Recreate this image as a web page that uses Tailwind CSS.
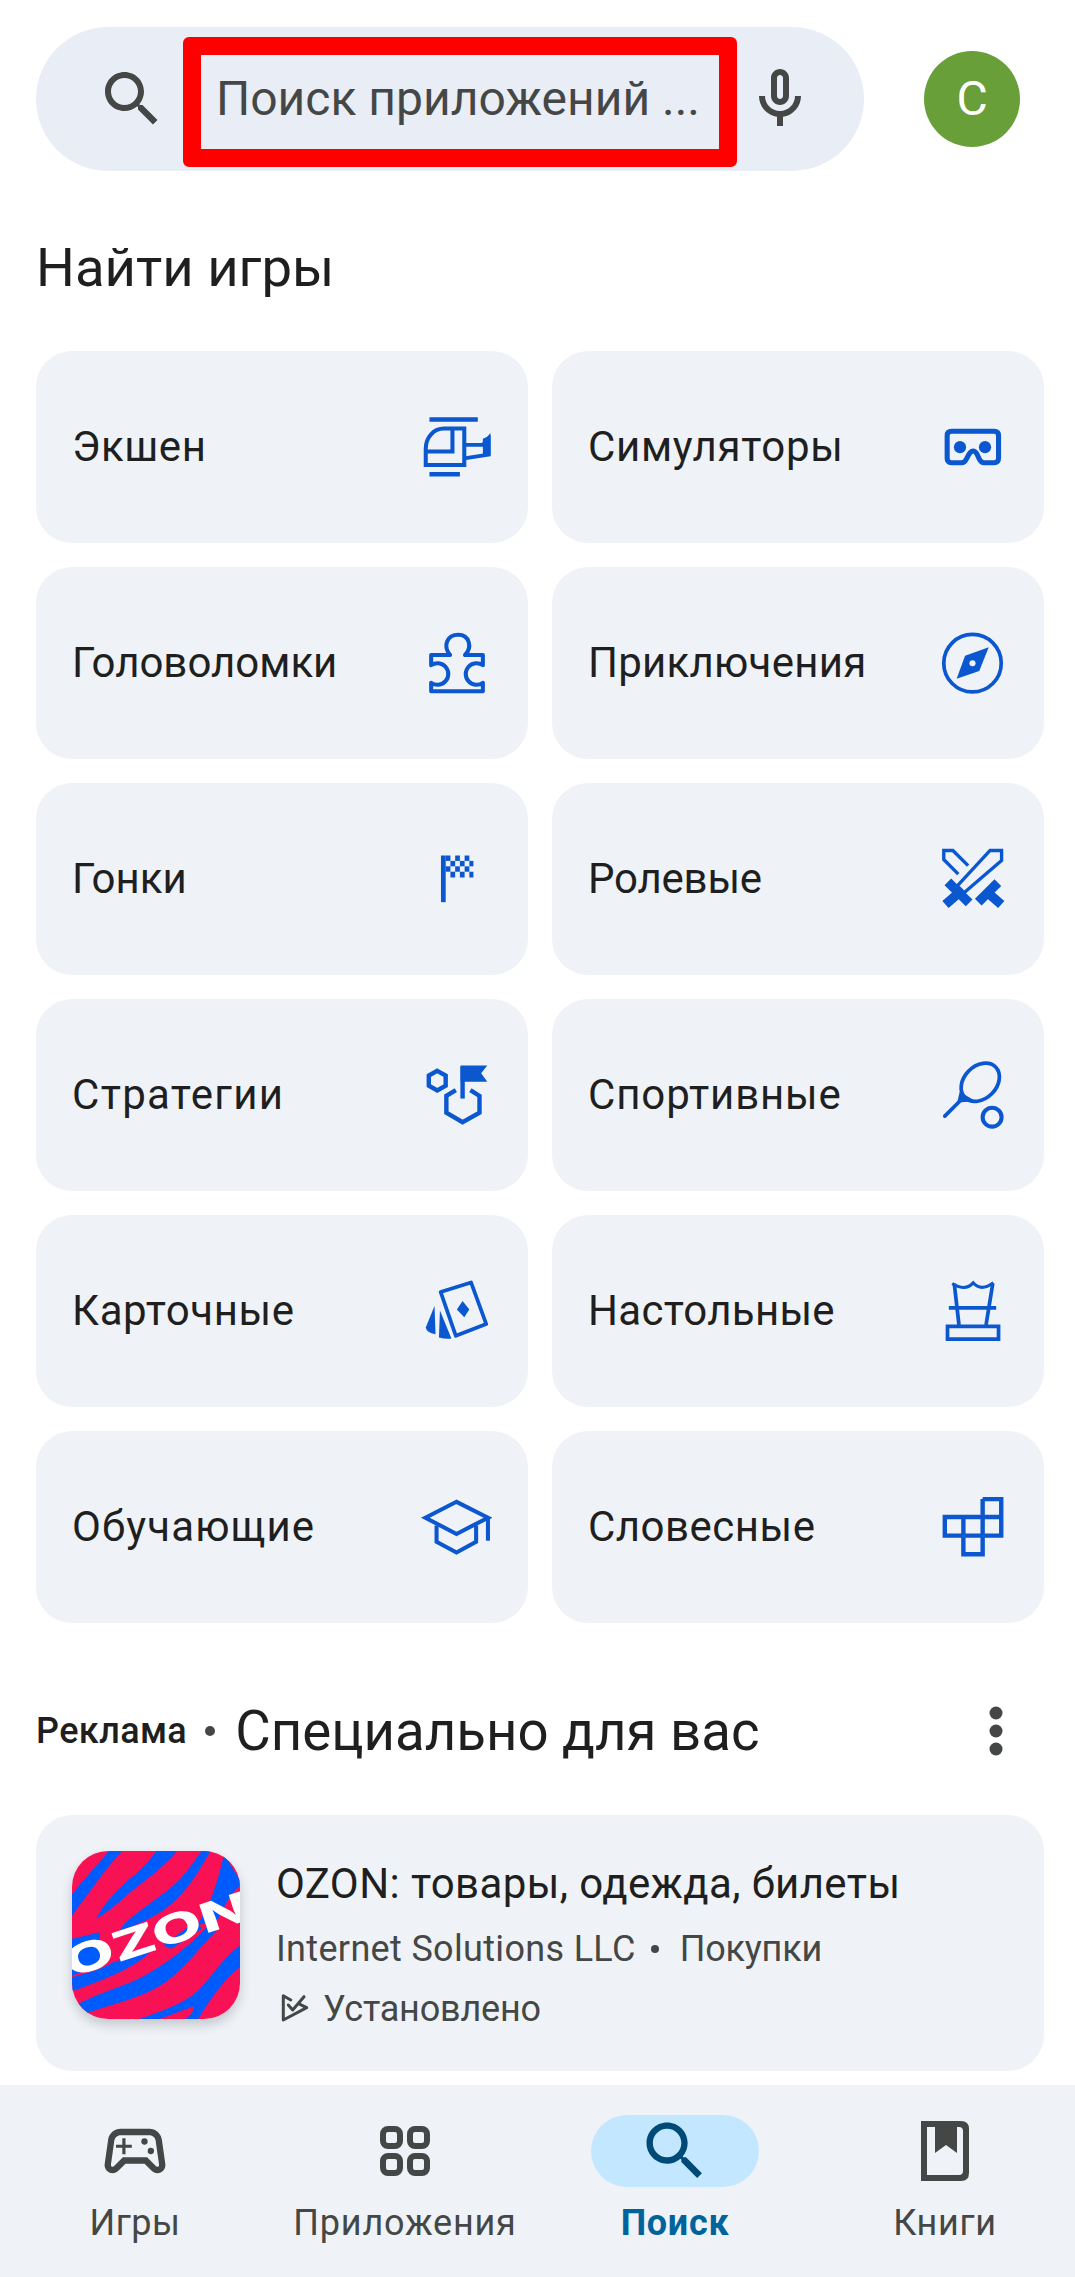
<!DOCTYPE html>
<html><head><meta charset="utf-8">
<script src="https://cdn.jsdelivr.net/npm/@tailwindcss/browser@4"></script>
</head>
<body class="bg-white">
<div class="w-[1075px] h-[2277px] overflow-hidden bg-white font-['Roboto',sans-serif] text-[#1f1f1f]">
  <!-- header -->
  <div class="flex items-center pt-[27px] pl-[36px]">
    <div class="flex items-center w-[828px] h-[144px] rounded-full bg-[#e9edf6] pl-[60px]">
      <svg class="w-[72px] h-[72px] shrink-0" viewBox="0 0 24 24" fill="#444746"><path d="M15.5 14h-.79l-.28-.27C15.41 12.59 16 11.11 16 9.5 16 5.91 13.09 3 9.5 3S3 5.91 3 9.5 5.91 16 9.5 16c1.61 0 3.09-.59 4.23-1.57l.27.28v.79l5 4.99L20.49 19l-4.99-5zm-6 0C7.01 14 5 11.99 5 9.5S7.01 5 9.5 5 14 7.01 14 9.5 11.99 14 9.5 14z"/></svg>
      <div class="ml-[15px] mt-[5px] w-[554px] h-[130px] shrink-0 border-[18px] border-[#ff0000] rounded-[6px] flex items-center pl-[15px] pb-[5px] text-[48px] leading-none text-[#444746] whitespace-nowrap">Поиск приложений ...</div>
      <svg class="ml-[7px] w-[72px] h-[72px] shrink-0" viewBox="0 0 24 24" fill="#444746"><path d="M12 14c1.66 0 3-1.34 3-3V5c0-1.66-1.34-3-3-3S9 3.34 9 5v6c0 1.66 1.34 3 3 3zm-1-9c0-.55.45-1 1-1s1 .45 1 1v6c0 .55-.45 1-1 1s-1-.45-1-1V5zm6 6c0 2.76-2.24 5-5 5s-5-2.24-5-5H5c0 3.53 2.61 6.43 6 6.92V21h2v-3.08c3.39-.49 6-3.39 6-6.92h-2z"/></svg>
    </div>
    <div class="ml-[60px] w-[96px] h-[96px] rounded-full bg-[#689f38] text-white text-[48px] flex items-center justify-center">C</div>
  </div>

  <h2 class="mt-[60px] ml-[36px] h-[72px] flex items-center text-[54.5px] leading-none font-normal">Найти игры</h2>

  <!-- grid -->
  <div class="mt-[48px] ml-[36px] w-[1008px] grid grid-cols-2 gap-[24px] auto-rows-[192px] text-[42px] leading-none">
    <div class="flex items-center justify-between rounded-[36px] bg-[#eff3f8] pl-[36px] pr-[36px]"><span class="tracking-[0.6px]">Экшен</span>
      <svg class="w-[72px] h-[72px]" viewBox="59 90 213 209" fill="none" stroke="#0b57d0" stroke-width="13"><path d="M87 113H230M87 275H177"/><path d="M190 140H130C100 140 76 165 76 200V248H190Z M155 140V208H78" stroke-width="12"/><path d="M190 188H245L262 168V217L190 228" stroke-width="11"/><path d="M245 170L268 160V220L245 222Z" fill="#0b57d0" stroke="none"/></svg></div>
    <div class="flex items-center justify-between rounded-[36px] bg-[#eff3f8] pl-[36px] pr-[36px]"><span class="tracking-[0.7px]">Симуляторы</span>
      <svg class="w-[72px] h-[72px]" viewBox="62 90 213 209" fill="none" stroke="#0b57d0" stroke-width="15"><path d="M108 148H234Q247 148 247 161V228Q247 241 234 241H205Q195 241 190 230L183 215Q172 198 160 215L152 230Q147 241 137 241H108Q95 241 95 228V161Q95 148 108 148Z"/><circle cx="133" cy="195" r="18" fill="#0b57d0" stroke="none"/><circle cx="207" cy="195" r="18" fill="#0b57d0" stroke="none"/></svg></div>

    <div class="flex items-center justify-between rounded-[36px] bg-[#eff3f8] pl-[36px] pr-[36px]"><span>Головоломки</span>
      <svg class="w-[72px] h-[72px]" viewBox="59 717 213 209" fill="none" stroke="#0b57d0" stroke-width="12" stroke-linejoin="round"><path d="M92 798H148C125 770 140 738 172 738C205 738 215 775 192 798H245V828A32 32 0 1 0 245 880V905H92V880A32 32 0 1 0 92 828Z"/></svg></div>
    <div class="flex items-center justify-between rounded-[36px] bg-[#eff3f8] pl-[36px] pr-[36px]"><span class="tracking-[0.26px]">Приключения</span>
      <svg class="w-[72px] h-[72px]" viewBox="62 717 213 209" fill="none"><circle cx="170" cy="822" r="85" stroke="#0b57d0" stroke-width="11"/><path d="M218 775L190 845L123 868L148 800Z" fill="#0b57d0"/><circle cx="170" cy="822" r="9" fill="#eff3f8"/></svg></div>

    <div class="flex items-center justify-between rounded-[36px] bg-[#eff3f8] pl-[36px] pr-[36px]"><span>Гонки</span>
      <svg class="w-[72px] h-[72px]" viewBox="59 1345 213 209" fill="#0b57d0"><rect x="121" y="1380" width="14" height="138"/><rect x="135" y="1380" width="14" height="16"/><rect x="163" y="1380" width="14" height="16"/><rect x="191" y="1380" width="14" height="16"/><rect x="149" y="1396" width="14" height="16"/><rect x="177" y="1396" width="14" height="16"/><rect x="205" y="1396" width="12" height="16"/><rect x="135" y="1412" width="14" height="16"/><rect x="163" y="1412" width="14" height="16"/><rect x="191" y="1412" width="14" height="16"/><rect x="149" y="1428" width="14" height="17"/><rect x="177" y="1428" width="14" height="17"/><rect x="205" y="1428" width="12" height="17"/></svg></div>
    <div class="flex items-center justify-between rounded-[36px] bg-[#eff3f8] pl-[36px] pr-[36px]"><span class="tracking-[-0.2px]">Ролевые</span>
      <svg class="w-[72px] h-[72px]" viewBox="62 1345 213 209" fill="none" stroke="#0b57d0" stroke-width="10"><path d="M256 1365V1395L145 1490L125 1470L222 1365Z"/><path d="M128 1435L85 1392V1365H112L157 1410"/><path d="M97 1458L160 1520M130 1490L90 1525M245 1460L187 1518M215 1490L255 1525" stroke-width="28"/></svg></div>

    <div class="flex items-center justify-between rounded-[36px] bg-[#eff3f8] pl-[36px] pr-[36px]"><span class="tracking-[1.3px]">Стратегии</span>
      <svg class="w-[72px] h-[72px]" viewBox="59 55 213 209" fill="none" stroke="#0b57d0" stroke-width="13"><path d="M110 88L135 102V132L110 146L85 132V102Z"/><path d="M165 145L137 162V212L185 240L235 212V162L208 145"/><path d="M185 170V75"/><path d="M179 72H258L240 95L258 120H179Z" fill="#0b57d0" stroke="none"/></svg></div>
    <div class="flex items-center justify-between rounded-[36px] bg-[#eff3f8] pl-[36px] pr-[36px]"><span class="tracking-[0.87px]">Спортивные</span>
      <svg class="w-[72px] h-[72px]" viewBox="62 55 213 209" fill="none" stroke="#0b57d0" stroke-width="11" stroke-linecap="round"><ellipse cx="193" cy="122" rx="64" ry="48" transform="rotate(-45 193 122)"/><path d="M88 222L135 175"/><path d="M132 150L180 178L125 182Z" fill="#0b57d0" stroke="none"/><circle cx="228" cy="225" r="28" stroke-width="12"/></svg></div>

    <div class="flex items-center justify-between rounded-[36px] bg-[#eff3f8] pl-[36px] pr-[36px]"><span class="tracking-[0.64px]">Карточные</span>
      <svg class="w-[72px] h-[72px]" viewBox="59 682 213 209" fill="none" stroke="#0b57d0" stroke-width="11" stroke-linejoin="round"><path d="M120 730L210 702L255 825L165 860Z"/><g fill="#0b57d0" stroke="none"><path d="M185 757L205 782L190 805L168 782Z"/><path d="M102 772L76 835Q78 850 105 855Z"/><path d="M118 785L115 865Q135 870 152 868Z"/></g></svg></div>
    <div class="flex items-center justify-between rounded-[36px] bg-[#eff3f8] pl-[36px] pr-[36px]"><span class="tracking-[0.3px]">Настольные</span>
      <svg class="w-[72px] h-[72px]" viewBox="62 682 213 209" fill="none" stroke="#0b57d0" stroke-width="11"><path d="M96 832H247V870H96Z"/><path d="M100 777H240"/><path d="M116 705L130 828M230 705L210 828"/><path d="M110 705Q150 730 172 703Q195 730 232 703" stroke-width="9"/></svg></div>

    <div class="flex items-center justify-between rounded-[36px] bg-[#eff3f8] pl-[36px] pr-[36px]"><span class="tracking-[1.1px]">Обучающие</span>
      <svg class="w-[72px] h-[72px]" viewBox="59 1310 213 209" fill="none" stroke="#0b57d0" stroke-width="12"><path d="M167 1340L75 1387L167 1435L260 1387Z"/><path d="M108 1410V1458L167 1490L225 1458V1410"/><path d="M260 1387V1455"/></svg></div>
    <div class="flex items-center justify-between rounded-[36px] bg-[#eff3f8] pl-[36px] pr-[36px]"><span class="tracking-[0.5px]">Словесные</span>
      <svg class="w-[72px] h-[72px]" viewBox="62 1310 213 209" fill="none" stroke="#0b57d0" stroke-width="13"><path d="M200 1332H255V1440H88V1385H255M200 1332V1495H143V1385"/></svg></div>
  </div>

  <!-- ad header -->
  <div class="mt-[72px] mx-[36px] w-[1008px] h-[72px] flex items-center whitespace-nowrap">
    <span class="text-[36px] font-medium leading-none tracking-[0.4px]">Реклама</span>
    <span class="ml-[18px] w-[10px] h-[10px] rounded-full bg-[#444746]"></span>
    <span class="ml-[20px] text-[54.6px] leading-none font-normal">Специально для вас</span>
    <svg class="ml-auto mr-[36px] w-[24px] h-[60px]" viewBox="0 0 24 60" fill="#444746"><circle cx="12" cy="12" r="6.5"/><circle cx="12" cy="30" r="6.5"/><circle cx="12" cy="48" r="6.5"/></svg>
  </div>

  <!-- ad card -->
  <div class="mt-[48px] ml-[36px] w-[1008px] h-[256px] rounded-[36px] bg-[#eff3f8] pl-[36px] pt-[36px] flex">
    <div class="w-[168px] h-[168px] shrink-0 rounded-[36px] overflow-hidden shadow-[0_6px_12px_rgba(0,0,0,0.18)]">
      <svg class="w-[168px] h-[168px] block" viewBox="67 62 503 503">
        <rect x="67" y="62" width="503" height="503" fill="#f91155"/>
        <g fill="#005bff">
          <path d="M178 62H218C170 110 110 200 67 255V192C100 150 150 95 178 62Z"/>
          <path d="M320 62H382C340 115 270 160 225 200C195 228 165 250 140 265C155 230 190 190 240 145C280 115 300 88 320 62Z"/>
          <path d="M455 62H482C445 125 410 190 340 240C300 265 260 285 210 300C225 270 280 235 340 190C395 150 425 105 455 62Z"/>
          <path d="M522 72L570 150V165C540 190 525 225 505 265L440 285C480 230 505 150 522 72Z"/>
          <path d="M475 285C420 345 345 405 265 445C205 472 140 490 85 520L110 548C200 515 290 500 360 445C420 395 450 350 500 300Z"/>
          <path d="M570 345V410C530 440 490 490 445 565H270C340 540 400 520 445 480C485 440 520 380 570 345Z"/>
          <path d="M67 325L150 305V405L67 435Z"/>
          <path d="M67 440C100 430 150 420 190 395L305 360C260 410 170 445 67 482Z"/>
          <path d="M340 345L440 270L455 295L365 355Z"/>
        </g>
        <path d="M330 565C370 550 410 535 432 527C430 545 420 558 405 565Z" fill="#f91155"/>
        <text x="0" y="0" transform="translate(60 442) rotate(-18)" font-family="Inter, sans-serif" font-weight="800" font-size="122" fill="#fff" textLength="575" lengthAdjust="spacingAndGlyphs">OZON</text>
      </svg>
    </div>
    <div class="ml-[36px] flex flex-col whitespace-nowrap">
      <div class="h-[66px] flex items-center text-[42px] leading-none tracking-[0.41px]">OZON: товары, одежда, билеты</div>
      <div class="h-[64px] flex items-center text-[36px] leading-none text-[#444746]"><span class="tracking-[0.33px]">Internet Solutions LLC</span><span class="ml-[15px] w-[8px] h-[8px] rounded-full bg-[#444746]"></span><span class="ml-[21px] tracking-[-0.2px]">Покупки</span></div>
      <div class="h-[56px] flex items-center text-[36px] leading-none text-[#444746]">
        <svg class="ml-[4px] w-[30px] h-[30px]" viewBox="0 0 30 30" fill="none" stroke="#444746" stroke-width="3" stroke-linejoin="round" stroke-linecap="round"><path d="M10.7 6L3.3 1.7V26L26.7 13.7L20 10.3"/><path d="M8.3 11L12.7 16L24 2.7"/></svg>
        <span class="ml-[13px] tracking-[-0.2px]">Установлено</span></div>
    </div>
  </div>

  <!-- nav -->
  <div class="mt-[14px] h-[192px] bg-[#eff3f8] grid grid-cols-[repeat(4,270px)] pt-[30px] text-[36px] leading-none text-[#444746] overflow-hidden">
    <div class="flex flex-col items-center">
      <div class="w-[168px] h-[72px] flex items-center justify-center"><svg class="w-[76px] h-[76px]" viewBox="0 0 24 24" fill="#444746"><path fill-rule="evenodd" d="M21.58 16.09l-1.09-7.66C20.21 6.46 18.52 5 16.53 5H7.47C5.48 5 3.79 6.46 3.51 8.43l-1.09 7.66C2.2 17.63 3.39 19 4.94 19c.68 0 1.32-.27 1.8-.75L9 16h6l2.25 2.25c.48.48 1.13.75 1.8.75 1.56 0 2.75-1.37 2.53-2.91zM19.48 16.81c-.08.09-.21.19-.42.19-.15 0-.29-.06-.4-.16L15.83 14H8.17l-2.83 2.84c-.11.1-.25.16-.4.16-.21 0-.34-.1-.42-.19-.08-.09-.16-.23-.13-.44l1.09-7.66C5.63 7.74 6.49 7 7.47 7h9.06c.98 0 1.84.74 1.98 1.72l1.09 7.66c.03.2-.05.34-.12.43z"/><path d="M9 8H8v2H6v1h2v2h1v-2h2v-1H9z"/><circle cx="17" cy="12" r="1"/><circle cx="15" cy="9" r="1"/></svg></div>
      <span class="mt-[12px] h-[48px] flex items-center tracking-[0.5px]">Игры</span>
    </div>
    <div class="flex flex-col items-center">
      <div class="w-[168px] h-[72px] flex items-center justify-center"><svg class="w-[50px] h-[50px]" viewBox="0 0 50 50" fill="none" stroke="#444746" stroke-width="6"><rect x="3" y="3" width="17" height="17" rx="5"/><rect x="30" y="3" width="17" height="17" rx="5"/><rect x="3" y="30" width="17" height="17" rx="5"/><rect x="30" y="30" width="17" height="17" rx="5"/></svg></div>
      <span class="mt-[12px] h-[48px] flex items-center tracking-[0.8px]">Приложения</span>
    </div>
    <div class="flex flex-col items-center">
      <div class="w-[168px] h-[72px] rounded-full bg-[#c2e7ff] flex items-center justify-center"><svg class="w-[76px] h-[76px]" viewBox="0 0 24 24" fill="#004a77"><path d="M15.5 14h-.79l-.28-.27C15.41 12.59 16 11.11 16 9.5 16 5.91 13.09 3 9.5 3S3 5.91 3 9.5 5.91 16 9.5 16c1.61 0 3.09-.59 4.23-1.57l.27.28v.79l5 4.99L20.49 19l-4.99-5zm-6 0C7.01 14 5 11.99 5 9.5S7.01 5 9.5 5 14 7.01 14 9.5 11.99 14 9.5 14z"/></svg></div>
      <span class="mt-[12px] h-[48px] flex items-center font-bold text-[#00639b] tracking-[0.7px]">Поиск</span>
    </div>
    <div class="flex flex-col items-center">
      <div class="w-[168px] h-[72px] flex items-center justify-center"><svg class="w-[48px] h-[60px]" viewBox="0 0 48 60" fill="#444746"><path fill-rule="evenodd" d="M0 0H40Q48 0 48 8V52Q48 60 40 60H0ZM6 6V54H38Q42 54 42 50V10Q42 6 38 6H36V32L25 24L14 32V6Z"/><path d="M20 6H30V20L25 16L20 20Z"/></svg></div>
      <span class="mt-[12px] h-[48px] flex items-center tracking-[0.7px]">Книги</span>
    </div>
  </div>
</div>
</body></html>
